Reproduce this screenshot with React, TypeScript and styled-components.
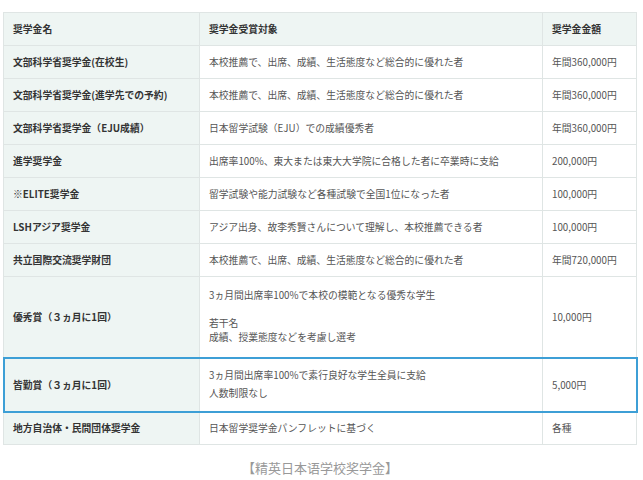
import React from "react";
import styled, { createGlobalStyle } from "styled-components";

const G = createGlobalStyle`
  body { margin: 0; background: #fff; font-family: "Noto Sans CJK JP", "Liberation Sans", sans-serif; }
`;
const Wrap = styled.div`padding: 12px 6px 0 3px;`;
const Table = styled.table`
  width: 634px; border-collapse: collapse; font-size: 9.8px; color: #555;
  td { border: 1px solid #dfe5e4; padding: 0 9px; height: 32px; vertical-align: middle; }
`;
const Row = styled.tr<{ $hl?: boolean; $h?: number }>`
  td { height: ${p => p.$h ?? 32}px; }
  ${p => p.$hl ? "outline: 2px solid #3d9fd6; outline-offset: -1px;" : ""}
`;
const Name = styled.td`
  width: 177px; background: #eef5f3; font-weight: bold; color: #333;
`;
const Body = styled.td<{ $head?: boolean }>`
  background: ${p => p.$head ? "#eef5f3" : "#fff"};
  ${p => p.$head ? "font-weight: bold; color:#333;" : ""}
`;
const Amt = styled(Body)`width: 75px;`;
const Line = styled.div<{ $gap?: number }>`line-height: 1.4; margin-top: ${p => p.$gap ?? 0}px;`;
const Caption = styled.div`
  text-align: center; margin-top: 13px; font-size: 13px; color: #999;
`;

const rows: [string, string, string][] = [
  ["文部科学省奨学金(在校生)", "本校推薦で、出席、成績、生活態度など総合的に優れた者", "年間360,000円"],
  ["文部科学省奨学金(進学先での予約)", "本校推薦で、出席、成績、生活態度など総合的に優れた者", "年間360,000円"],
  ["文部科学省奨学金（EJU成績）", "日本留学試験（EJU）での成績優秀者", "年間360,000円"],
  ["進学奨学金", "出席率100%、東大または東大大学院に合格した者に卒業時に支給", "200,000円"],
  ["※ELITE奨学金", "留学試験や能力試験など各種試験で全国1位になった者", "100,000円"],
  ["LSHアジア奨学金", "アジア出身、故李秀賢さんについて理解し、本校推薦できる者", "100,000円"],
  ["共立国際交流奨学財団", "本校推薦で、出席、成績、生活態度など総合的に優れた者", "年間720,000円"],
];

export default function App() {
  return (
    <Wrap>
      <G />
      <Table>
        <tbody>
          <Row><Name>奨学金名</Name><Body $head>奨学金受賞対象</Body><Amt $head>奨学金金額</Amt></Row>
          {rows.map(r => (
            <Row key={r[0]}><Name>{r[0]}</Name><Body>{r[1]}</Body><Amt>{r[2]}</Amt></Row>
          ))}
          <Row $h={80}>
            <Name>優秀賞（３ヵ月に1回）</Name>
            <Body>
              <Line>3ヵ月間出席率100%で本校の模範となる優秀な学生</Line>
              <Line $gap={14}>若干名</Line>
              <Line>成績、授業態度などを考慮し選考</Line>
            </Body>
            <Amt>10,000円</Amt>
          </Row>
          <Row $hl $h={53}>
            <Name>皆勤賞（３ヵ月に1回）</Name>
            <Body>
              <Line>3ヵ月間出席率100%で素行良好な学生全員に支給</Line>
              <Line $gap={4}>人数制限なし</Line>
            </Body>
            <Amt>5,000円</Amt>
          </Row>
          <Row><Name>地方自治体・民間団体奨学金</Name><Body>日本留学奨学金パンフレットに基づく</Body><Amt>各種</Amt></Row>
        </tbody>
      </Table>
      <Caption>【精英日本语学校奖学金】</Caption>
    </Wrap>
  );
}
